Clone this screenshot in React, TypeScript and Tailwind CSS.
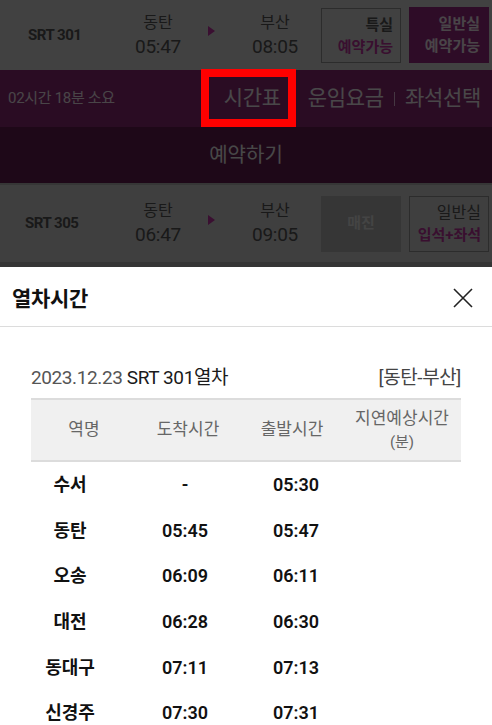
import { type JSX } from 'react';

type Stop = {
  name: string;
  arrive: string;
  depart: string;
};

const stops: Stop[] = [
  { name: '수서', arrive: '-', depart: '05:30' },
  { name: '동탄', arrive: '05:45', depart: '05:47' },
  { name: '오송', arrive: '06:09', depart: '06:11' },
  { name: '대전', arrive: '06:28', depart: '06:30' },
  { name: '동대구', arrive: '07:11', depart: '07:13' },
  { name: '신경주', arrive: '07:30', depart: '07:31' },
];

const font = { fontFamily: 'Roboto, "Noto Sans CJK KR", sans-serif' };

function Arrow(): JSX.Element {
  return (
    <svg width="7" height="10" viewBox="0 0 7 10" className="mt-[-8px]">
      <polygon points="0,0 7,5 0,10" fill="#c132a3" />
    </svg>
  );
}

function Station({ name, time }: { name: string; time: string }): JSX.Element {
  return (
    <div className="flex flex-col items-center leading-none">
      <div className="text-[16px] text-[#555]">{name}</div>
      <div className="text-[19px] text-[#555] mt-[6px] tracking-[-0.3px]">{time}</div>
    </div>
  );
}

export default function App(): JSX.Element {
  return (
    <div style={font} className="relative w-[492px] h-[725px] overflow-hidden bg-white">
      {/* train 301 */}
      <div className="h-[70px] bg-[#d9d9d9] flex items-center">
        <div className="w-[115px] pl-[28px] text-[15px] font-bold text-[#555] tracking-[-0.5px]">SRT 301</div>
        <div className="w-[86px] flex justify-center"><Station name="동탄" time="05:47" /></div>
        <div className="w-[20px] flex justify-center"><Arrow /></div>
        <div className="w-[100px] flex justify-center pl-[8px]"><Station name="부산" time="08:05" /></div>
        <div className="w-[80px] h-[55px] mt-[1px] border border-[#939393] flex flex-col items-end justify-center pr-[7px] text-[15px] font-bold leading-[22px]">
          <span className="text-[#555]">특실</span>
          <span className="text-[#c0329f]">예약가능</span>
        </div>
        <div className="ml-[8px] w-[80px] h-[56px] bg-[#992882] flex flex-col items-end justify-center pr-[9px] text-[15px] font-bold leading-[22px] text-[#f5e6f0]">
          <span>일반실</span>
          <span>예약가능</span>
        </div>
      </div>

      {/* detail tabs */}
      <div className="h-[57px] bg-[#8c2875] flex items-center">
        <div className="pl-[8px] text-[15px] text-[#f5e6f0] tracking-[-0.3px] flex-1">02시간 18분 소요</div>
        <div className="flex items-center text-[21px] text-[#f5eef3] pr-[11px] tracking-[-0.3px]">
          <span className="mr-[27px]">시간표</span>
          <span>운임요금</span>
          <span className="mx-[10px] w-px h-[14px] bg-[#e8b8dc]" />
          <span>좌석선택</span>
        </div>
      </div>

      {/* book button */}
      <div className="h-[58px] bg-[#641b50] flex items-center justify-center text-[20px] text-[#f0f0f0] border-b-2 border-[#b4b4b4]">
        예약하기
      </div>

      {/* train 305 */}
      <div className="h-[82px] bg-[#d2d2d2] flex items-center border-b-[5px] border-[#b1b1b1]">
        <div className="w-[115px] pl-[25px] text-[15px] font-bold text-[#555] tracking-[-0.5px]">SRT 305</div>
        <div className="w-[86px] flex justify-center"><Station name="동탄" time="06:47" /></div>
        <div className="w-[20px] flex justify-center"><Arrow /></div>
        <div className="w-[100px] flex justify-center pl-[8px]"><Station name="부산" time="09:05" /></div>
        <div className="w-[80px] h-[56px] bg-[#b4b4b4] flex items-center justify-center text-[15px] font-bold text-[#e3e3e3]">
          매진
        </div>
        <div className="ml-[8px] w-[80px] h-[56px] border border-[#939393] flex flex-col items-end justify-center pr-[7px] text-[15px] font-bold leading-[22px]">
          <span className="text-[#555] font-normal text-[16px]">일반실</span>
          <span className="text-[#c0329f]">입석+좌석</span>
        </div>
      </div>

      {/* dim backdrop */}
      <div className="absolute inset-0 bg-black/70" />

      {/* highlight */}
      <div className="absolute left-[201px] top-[69px] w-[95px] h-[58px] border-[8px] border-[#ff0000]" />

      {/* modal sheet */}
      <div className="absolute left-0 right-0 top-[267px] bottom-0 bg-white">
        <div className="h-[60px] flex items-center justify-between pl-[12px] pr-[19px] border-b border-[#dcdcdc]">
          <div className="text-[21px] font-bold text-[#111] mt-[6px] tracking-[-0.3px]">열차시간</div>
          <svg width="20" height="20" viewBox="0 0 20 20" className="mt-[2px]">
            <path d="M1 1 L19 19 M19 1 L1 19" stroke="#222" strokeWidth="1.6" />
          </svg>
        </div>

        <div className="px-[31px]">
          <div className="flex items-end justify-between pt-[41px] pb-[11px] leading-none">
            <div className="text-[19px] tracking-[-0.4px]">
              <span className="text-[#555]">2023.12.23 </span>
              <span className="text-[#1a1a1a]">SRT 301열차</span>
            </div>
            <div className="text-[19px] text-[#444] tracking-[-0.4px]">[동탄-부산]</div>
          </div>

          <div className="grid grid-cols-[106px_102px_106px_114px] h-[64px] bg-[#f0f0f0] border-y-2 border-[#dcdcdc] text-[17px] text-[#666] items-center text-center">
            <div>역명</div>
            <div>도착시간</div>
            <div>출발시간</div>
            <div className="flex flex-col items-center leading-[26px] mt-[-2px]">
              <span>지연예상시간</span>
              <span className="text-[15px] leading-[22px]">(분)</span>
            </div>
          </div>

          {stops.map((s) => (
            <div key={s.name} className="grid grid-cols-[78px_152px_70px_1fr] h-[45.6px] items-center text-center text-[18px] font-semibold text-[#111]">
              <div>{s.name}</div>
              <div>{s.arrive}</div>
              <div>{s.depart}</div>
              <div />
            </div>
          ))}
        </div>
      </div>
    </div>
  );
}
